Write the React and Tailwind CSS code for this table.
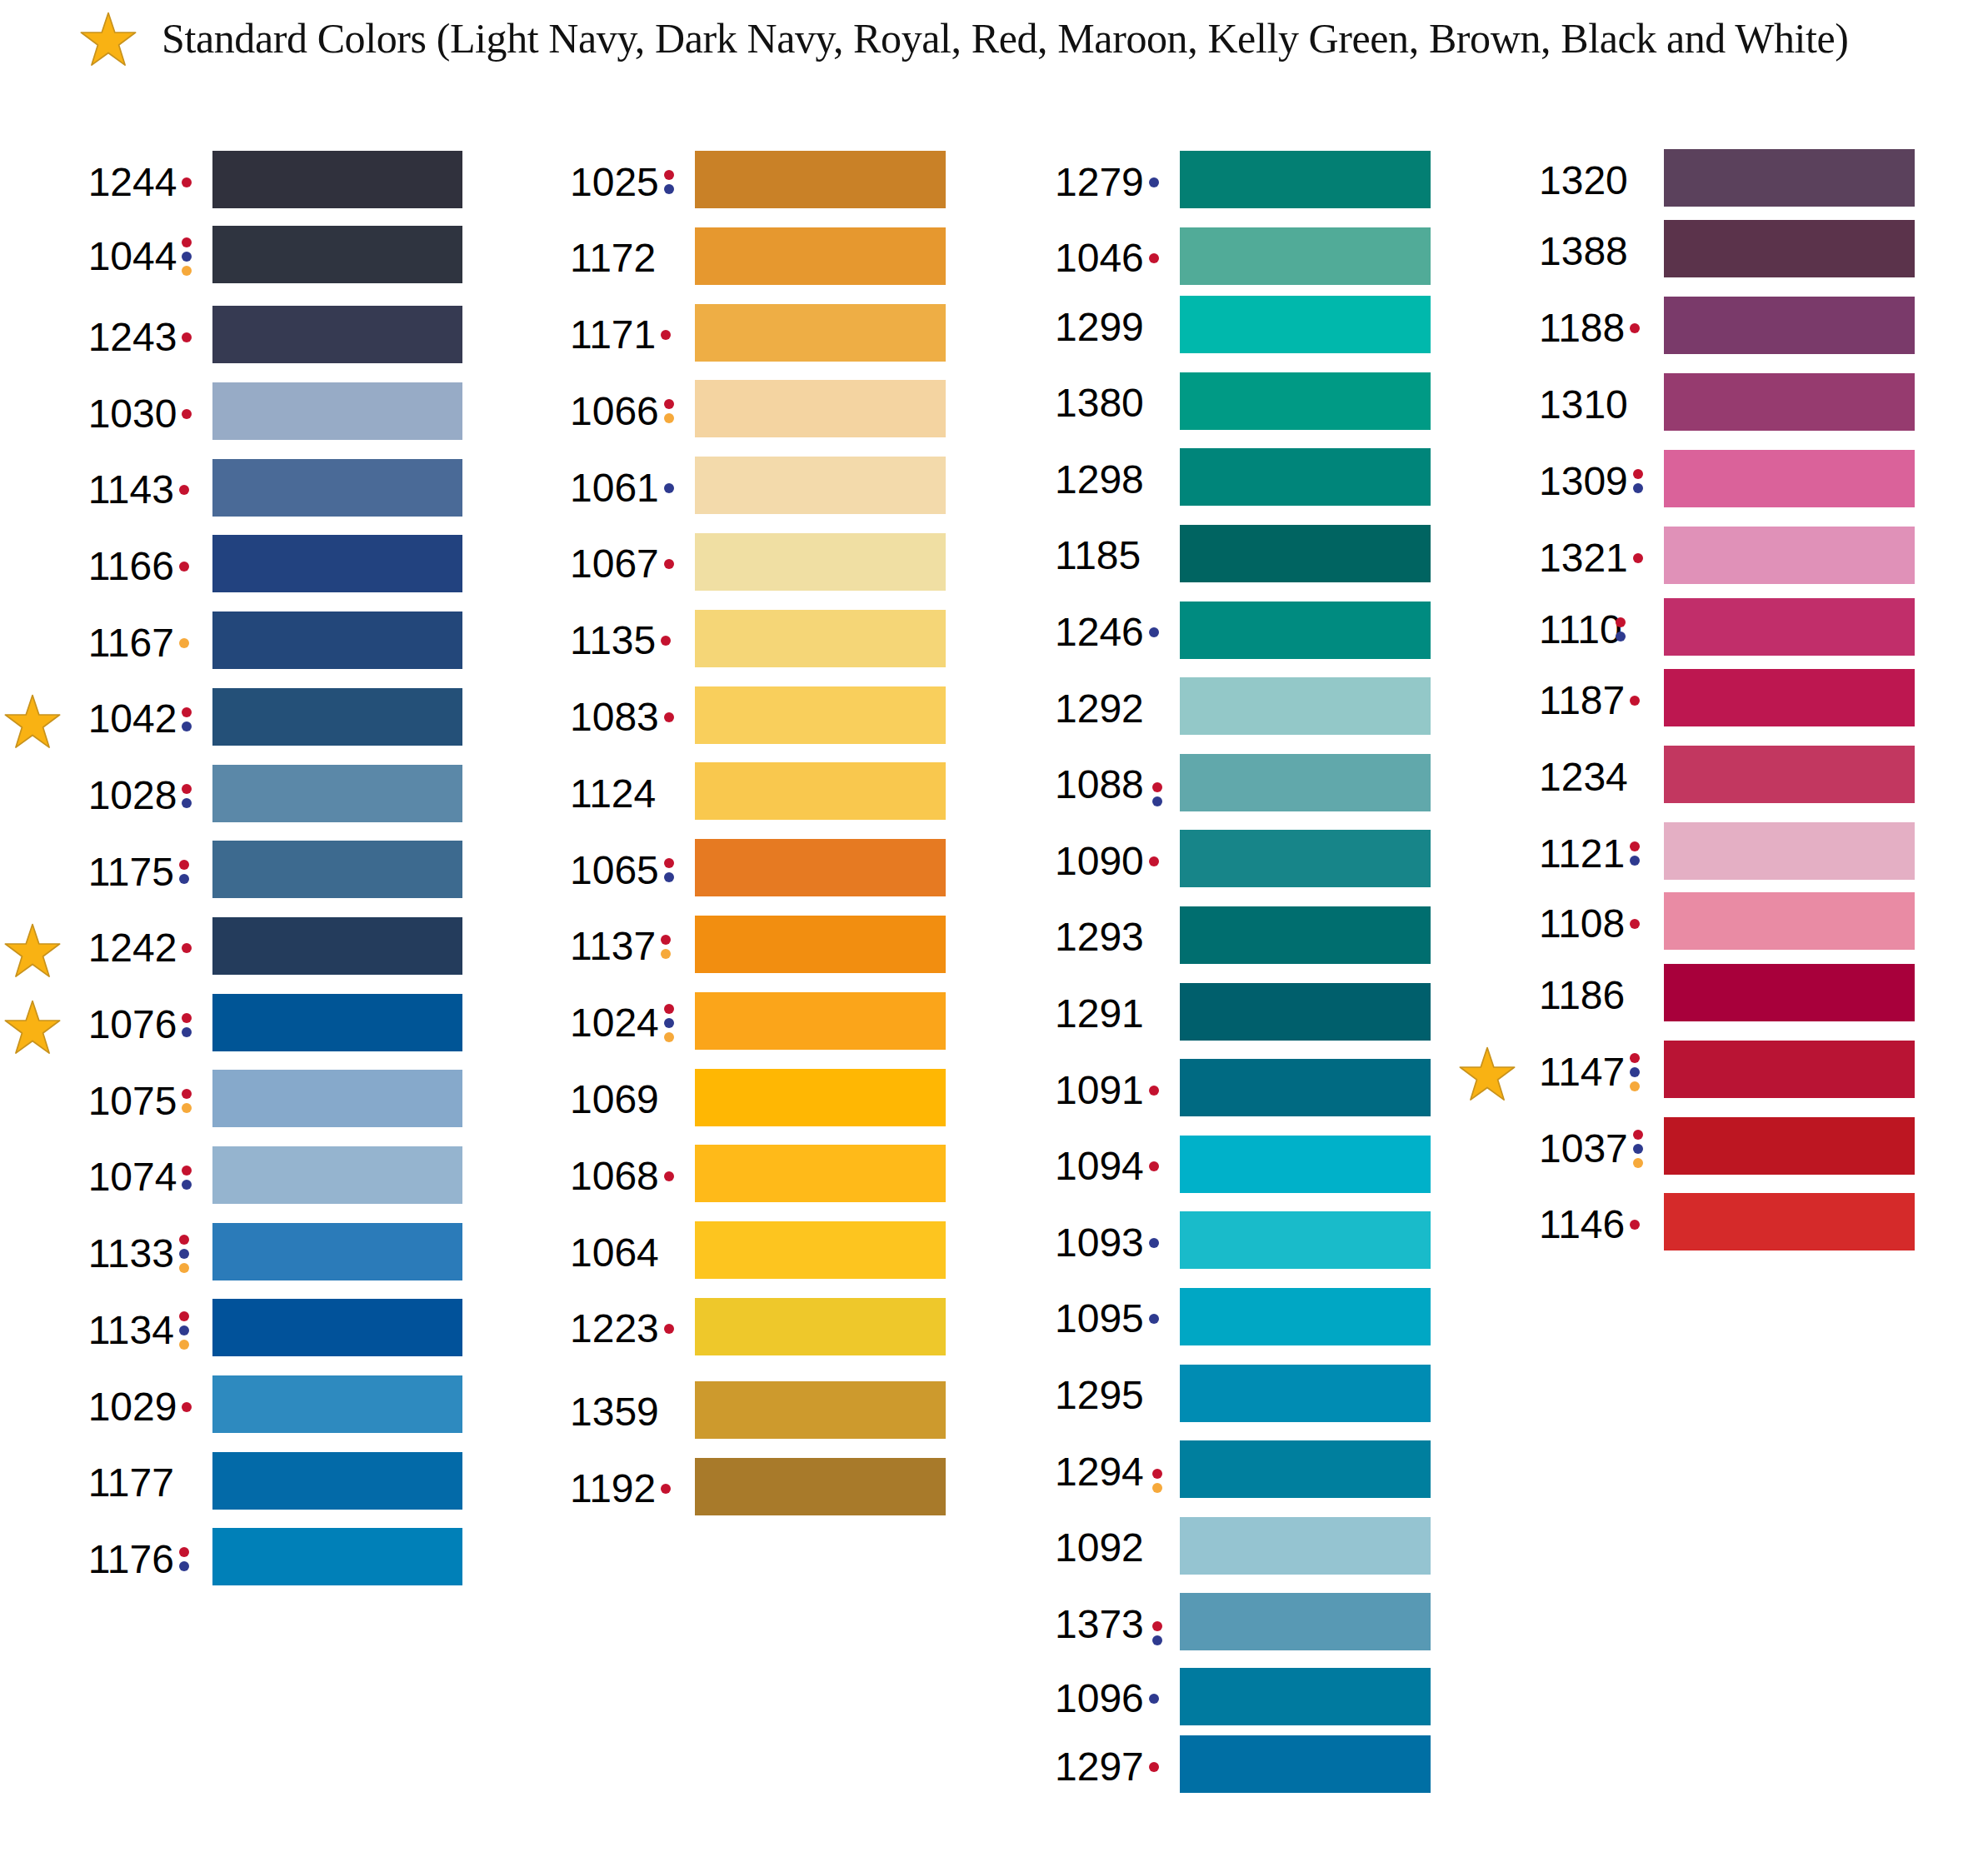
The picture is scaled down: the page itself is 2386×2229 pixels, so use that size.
import React from 'react';

const DOT = {
  r: 'bg-[#c4122f]',
  b: 'bg-[#2e3a8f]',
  o: 'bg-[#f6a93b]',
};

// [code, swatch colour, dots, options]
const columns = [
  {
    id: 'navy',
    wrap: 'w-[555px]',
    gap: 'gap-[22.7px]',
    starSlot: 'w-[106px] pl-[5px]',
    rows: [
      ['1244', 'bg-[#30313d]', 'r'],
      ['1044', 'bg-[#2f3440]', 'rbo', { mt: '-mt-[2px]' }],
      ['1243', 'bg-[#363a52]', 'r', { mt: 'mt-[5px]' }],
      ['1030', 'bg-[#97abc6]', 'r'],
      ['1143', 'bg-[#4a6a97]', 'r'],
      ['1166', 'bg-[#22427f]', 'r'],
      ['1167', 'bg-[#23477a]', 'o'],
      ['1042', 'bg-[#245078]', 'rb', { star: true }],
      ['1028', 'bg-[#5b88a8]', 'rb'],
      ['1175', 'bg-[#3d6a8f]', 'rb'],
      ['1242', 'bg-[#243c5c]', 'r', { star: true }],
      ['1076', 'bg-[#005596]', 'rb', { star: true }],
      ['1075', 'bg-[#86a9cb]', 'ro'],
      ['1074', 'bg-[#95b4cf]', 'rb'],
      ['1133', 'bg-[#2b7bb9]', 'rbo'],
      ['1134', 'bg-[#01529a]', 'rbo'],
      ['1029', 'bg-[#2e8abf]', 'r'],
      ['1177', 'bg-[#036aa8]', ''],
      ['1176', 'bg-[#0080b8]', 'rb'],
    ],
  },
  {
    id: 'gold',
    wrap: 'w-[452px] ml-[129px]',
    gap: 'gap-[22.8px]',
    rows: [
      ['1025', 'bg-[#c98127]', 'rb'],
      ['1172', 'bg-[#e6982f]', ''],
      ['1171', 'bg-[#eeae45]', 'r'],
      ['1066', 'bg-[#f4d4a1]', 'ro'],
      ['1061', 'bg-[#f3daab]', 'b'],
      ['1067', 'bg-[#f0dfa3]', 'r'],
      ['1135', 'bg-[#f5d677]', 'r'],
      ['1083', 'bg-[#f9cf5c]', 'r'],
      ['1124', 'bg-[#f9c84e]', ''],
      ['1065', 'bg-[#e67a22]', 'rb'],
      ['1137', 'bg-[#f28e10]', 'ro'],
      ['1024', 'bg-[#fba51a]', 'rbo'],
      ['1069', 'bg-[#ffb703]', ''],
      ['1068', 'bg-[#ffba19]', 'r'],
      ['1064', 'bg-[#fdc51f]', ''],
      ['1223', 'bg-[#eec82b]', 'r'],
      ['1359', 'bg-[#cd9a2d]', '', { mt: 'mt-[8px]' }],
      ['1192', 'bg-[#a87a2a]', 'r'],
    ],
  },
  {
    id: 'teal',
    wrap: 'w-[452px] ml-[130px]',
    gap: 'gap-[22.6px]',
    rows: [
      ['1279', 'bg-[#037f73]', 'b'],
      ['1046', 'bg-[#51ab98]', 'r'],
      ['1299', 'bg-[#00b8ac]', '', { mt: '-mt-[9px]' }],
      ['1380', 'bg-[#009a85]', ''],
      ['1298', 'bg-[#00857a]', ''],
      ['1185', 'bg-[#006461]', ''],
      ['1246', 'bg-[#008b80]', 'b'],
      ['1292', 'bg-[#93c8c8]', ''],
      ['1088', 'bg-[#61a8ab]', 'rb', { low: true }],
      ['1090', 'bg-[#178589]', 'r'],
      ['1293', 'bg-[#006e6f]', ''],
      ['1291', 'bg-[#005f6c]', ''],
      ['1091', 'bg-[#006a82]', 'r'],
      ['1094', 'bg-[#00b1c9]', 'r'],
      ['1093', 'bg-[#19bbca]', 'b'],
      ['1095', 'bg-[#00a7c4]', 'b'],
      ['1295', 'bg-[#008cb3]', ''],
      ['1294', 'bg-[#007f9e]', 'ro', { low: true }],
      ['1092', 'bg-[#95c4d1]', ''],
      ['1373', 'bg-[#5899b4]', 'rb', { low: true }],
      ['1096', 'bg-[#007a9f]', 'b', { mt: '-mt-[2px]' }],
      ['1297', 'bg-[#006fa4]', 'r', { mt: '-mt-[10px]' }],
    ],
  },
  {
    id: 'berry',
    wrap: 'w-[550px] ml-[30px] -mt-[2px]',
    gap: 'gap-[23px]',
    starSlot: 'w-[99px] pl-[3px]',
    rows: [
      ['1320', 'bg-[#5b415c]', ''],
      ['1388', 'bg-[#5b334b]', '', { mt: '-mt-[7px]' }],
      ['1188', 'bg-[#7a3a6a]', 'r'],
      ['1310', 'bg-[#963b6f]', ''],
      ['1309', 'bg-[#da629a]', 'rb'],
      ['1321', 'bg-[#e091b8]', 'r'],
      ['1110', 'bg-[#c12e6a]', 'rb', { mt: '-mt-[6px]', tight: true }],
      ['1187', 'bg-[#bd1750]', 'r', { mt: '-mt-[7px]' }],
      ['1234', 'bg-[#c23760]', ''],
      ['1121', 'bg-[#e4afc4]', 'rb'],
      ['1108', 'bg-[#e98ba4]', 'r', { mt: '-mt-[8px]' }],
      ['1186', 'bg-[#a8003b]', '', { mt: '-mt-[6px]' }],
      ['1147', 'bg-[#b91434]', 'rbo', { star: true }],
      ['1037', 'bg-[#bd1622]', 'rbo'],
      ['1146', 'bg-[#d52a2a]', 'r', { mt: '-mt-[1px]' }],
    ],
  },
];

const Star = ({ className = '' }) => (
  <svg viewBox="0 0 100 100" className={className}>
    <polygon
      points="50,3 61.5,37.5 98,37.5 68.5,59.5 79.5,95 50,73.5 20.5,95 31.5,59.5 2,37.5 38.5,37.5"
      fill="#f9b213"
      stroke="#c8921c"
      strokeWidth="2.5"
      strokeLinejoin="round"
    />
  </svg>
);

const Dots = ({ dots, low, tight }) => {
  if (!dots) return null;
  return (
    <div
      className={`relative z-10 flex flex-col gap-[5px] ${tight ? '-ml-[8px]' : 'ml-[6px]'} ${low ? 'translate-y-[11px] ml-[10px]' : ''}`}
    >
      {dots.split('').map((d, i) => (
        <span key={i} className={`block w-[12px] h-[12px] rounded-full ${DOT[d]}`} />
      ))}
    </div>
  );
};

const SwatchRow = ({ row, starSlot }) => {
  const [code, color, dots, opts = {}] = row;
  return (
    <div className={`flex items-center h-[69px] ${opts.mt || ''}`}>
      {starSlot && (
        <div className={`${starSlot} h-full flex items-center`}>
          {opts.star && <Star className="w-[68px] h-[69px] translate-y-[6px]" />}
        </div>
      )}
      <div className="w-[150px] flex items-center translate-y-[3px]">
        <span className="text-[48px] leading-none text-black">{code}</span>
        <Dots dots={dots} low={opts.low} tight={opts.tight} />
      </div>
      <div className={`w-[301px] h-[69px] ${color}`} />
    </div>
  );
};

export default function App() {
  return (
    <div className="w-[2386px] h-[2229px] bg-white overflow-hidden font-['Liberation_Sans',Arial,sans-serif]">
      <header className="h-[96px] pt-[13px] pl-[96px] flex items-start">
        <Star className="w-[68px] h-[69px] shrink-0" />
        <h1 className="ml-[30px] pt-[3px] text-[50px] tracking-[-0.4px] leading-[60px] text-[#111] font-['Liberation_Serif','Times_New_Roman',serif] whitespace-nowrap">
          Standard Colors (Light Navy, Dark Navy, Royal, Red, Maroon, Kelly Green, Brown, Black and White)
        </h1>
      </header>
      <main className="pt-[85px] flex items-start">
        {columns.map(col => (
          <section key={col.id} className={`flex flex-col shrink-0 ${col.wrap} ${col.gap}`}>
            {col.rows.map(row => (
              <SwatchRow key={row[0]} row={row} starSlot={col.starSlot} />
            ))}
          </section>
        ))}
      </main>
    </div>
  );
}
